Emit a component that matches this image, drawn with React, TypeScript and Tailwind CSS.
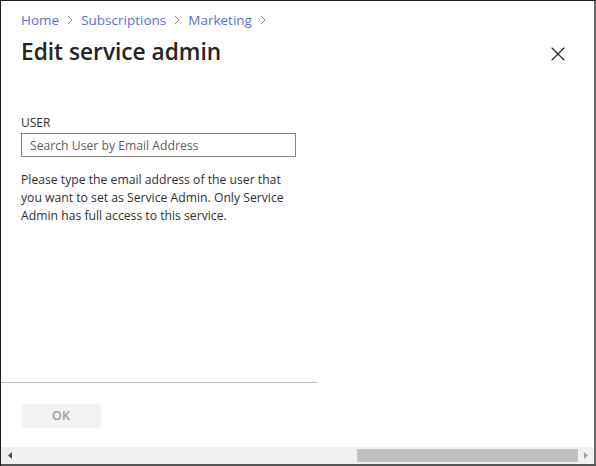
import { X } from 'lucide-react'

export default function App() {
  return (
    <div
      className="w-[596px] h-[466px] flex flex-col bg-white border-t border-l border-[#1f1f1f] overflow-hidden"
      style={{ fontFamily: '"Open Sans", "Noto Sans", sans-serif' }}
    >
      <div className="flex flex-1 min-h-0 border-r-2 border-[#6b6b6b]">
        <div className="flex-1 flex flex-col">
          <div className="flex items-center pl-5 pt-[9px] text-[13.5px] leading-[20px] text-[#5a6fd6]">
            <span>Home</span>
            <Chevron />
            <span>Subscriptions</span>
            <Chevron />
            <span>Marketing</span>
            <Chevron />
          </div>

          <div className="flex items-center justify-between pl-5 pr-[24px] mt-[6px]">
            <h1 className="text-[22.7px] leading-[32px] font-semibold text-[#252423]">Edit service admin</h1>
            <X className="w-[24px] h-[24px] text-[#1f1f1f] mt-[4px]" strokeWidth={1.1} />
          </div>

          <div className="w-[316px] flex-1 flex flex-col">
            <div className="pl-5 pt-[47px]">
              <label className="block text-[12px] leading-[16px] text-[#323130]">USER</label>
              <input
                placeholder="Search User by Email Address"
                className="mt-[2px] w-[275px] h-[24px] border border-[#8a8886] px-2 text-[12.2px] text-[#323130] placeholder:text-[#605e5c] outline-none"
              />
              <p className="mt-[14px] w-[280px] text-[12.2px] leading-[18px] text-[#323130]">
                Please type the email address of the user that you want to set as Service Admin. Only Service Admin has full access to this service.
              </p>
            </div>
            <div className="flex-1" />
            <div className="border-t border-[#bdbdbd]" />
            <div className="pl-5 pt-[19px] pb-[19px]">
              <button className="w-[80px] h-[24px] rounded-sm bg-[#f3f2f1] text-[12.5px] font-semibold text-[#a19f9d]">
                OK
              </button>
            </div>
          </div>
        </div>
      </div>

      <div className="h-[17px] flex items-center bg-[#f0f0f0] border-r-2 border-[#6b6b6b]">
        <svg width="16" height="17" viewBox="0 0 16 17" className="shrink-0">
          <path d="M11 5 L7 8.5 L11 12 Z" fill="#505050" />
        </svg>
        <div className="flex-1 h-full flex items-center pl-[340px]">
          <div className="h-[13px] flex-1 bg-[#c1c1c1]" />
        </div>
        <svg width="16" height="17" viewBox="0 0 16 17" className="shrink-0">
          <path d="M6 5 L10 8.5 L6 12 Z" fill="#a3a3a3" />
        </svg>
      </div>
      <div className="h-[2px] bg-[#555]" />
    </div>
  )
}

function Chevron() {
  return (
    <svg width="22" height="12" viewBox="0 0 22 12" className="shrink-0">
      <path d="M9 2 L13 6 L9 10" fill="none" stroke="#8a8886" strokeWidth="1" />
    </svg>
  )
}
